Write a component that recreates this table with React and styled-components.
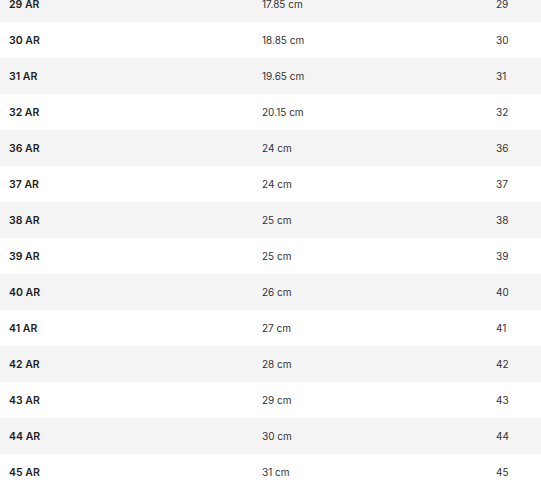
import React from "react";
import styled, { createGlobalStyle } from "styled-components";

const GlobalStyle = createGlobalStyle`
  html, body {
    margin: 0;
    padding: 0;
    background: #fff;
    overflow: hidden;
  }
`;

const Table = styled.div`
  width: 541px;
  margin-top: -14px;
  font-family: Inter, "Liberation Sans", sans-serif;
  color: #222;
`;

const Row = styled.div`
  display: grid;
  grid-template-columns: 253px 234px 1fr;
  align-items: center;
  height: 36px;
  padding-left: 9px;
  background: ${({ $shaded }) => ($shaded ? "#f4f4f4" : "#fff")};
`;

const Size = styled.span`
  font-size: 10.5px;
  font-weight: 600;
  color: #222;
`;

const Cell = styled.span`
  font-size: 10px;
  font-weight: 400;
  color: #333;
`;

const rows = [
  ["29 AR", "17.85 cm", "29"],
  ["30 AR", "18.85 cm", "30"],
  ["31 AR", "19.65 cm", "31"],
  ["32 AR", "20.15 cm", "32"],
  ["36 AR", "24 cm", "36"],
  ["37 AR", "24 cm", "37"],
  ["38 AR", "25 cm", "38"],
  ["39 AR", "25 cm", "39"],
  ["40 AR", "26 cm", "40"],
  ["41 AR", "27 cm", "41"],
  ["42 AR", "28 cm", "42"],
  ["43 AR", "29 cm", "43"],
  ["44 AR", "30 cm", "44"],
  ["45 AR", "31 cm", "45"]
];

export default function App() {
  return (
    <>
      <GlobalStyle />
      <Table>
        {rows.map(([size, length, eu], i) => (
          <Row key={size} $shaded={i % 2 === 0}>
            <Size>{size}</Size>
            <Cell>{length}</Cell>
            <Cell>{eu}</Cell>
          </Row>
        ))}
      </Table>
    </>
  );
}
